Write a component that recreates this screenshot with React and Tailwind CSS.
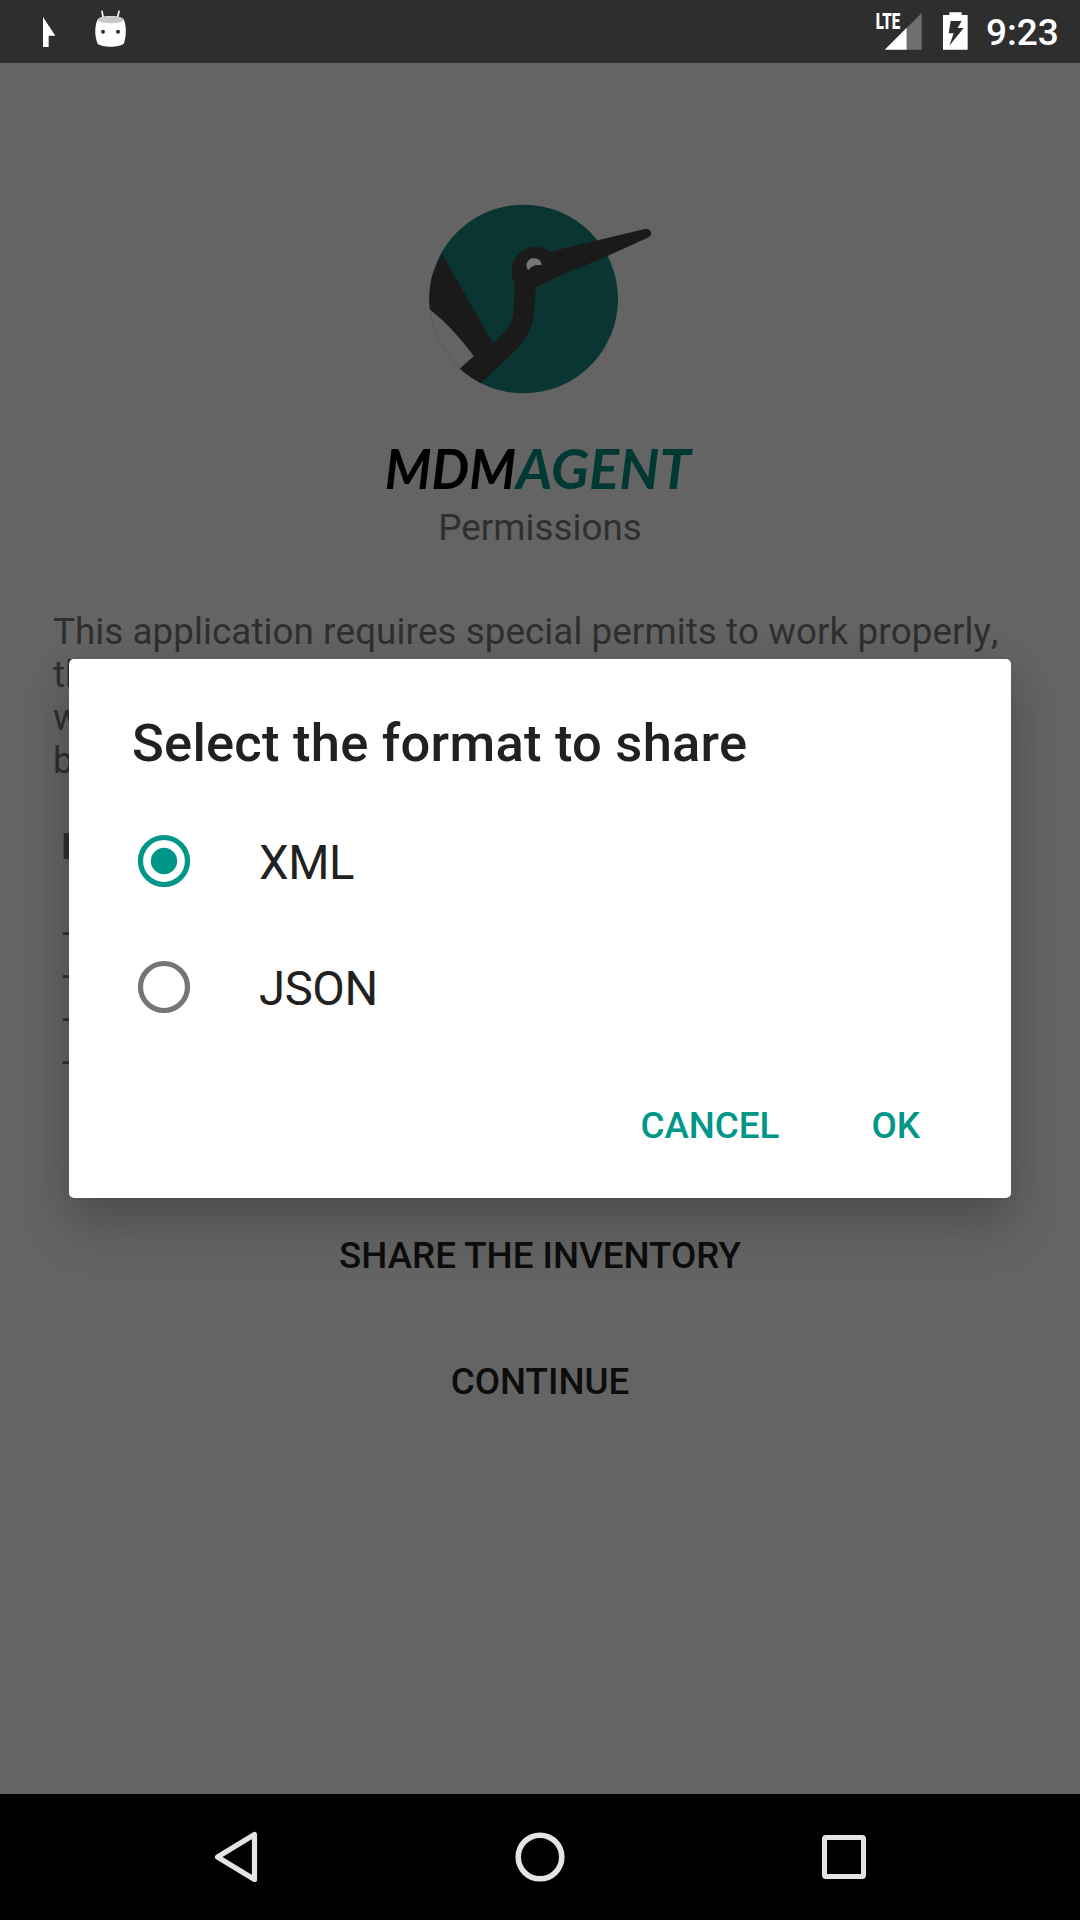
const bodyLines = [
  { text: "This application requires special permits to work properly," },
  { text: "th" },
  { text: "w" },
  { text: "b" },
];

function StatusBar() {
  return (
    <header className="flex h-[63px] shrink-0 items-center justify-between bg-[#2e2e2e]">
      <svg className="h-[63px] w-[200px]" viewBox="0 0 600 189">
        <path d="M129 51 L166 107 H146 V141 H129 Z" fill="#fff" />
        <path d="M306 34 L311 60 M357 34 L351 60" stroke="#fff" strokeWidth="5" strokeLinecap="round" />
        <path
          d="M292 60 C302 44 362 44 372 60 C380 82 379 110 371 131 C356 143 308 143 293 131 C284 110 283 82 292 60 Z"
          fill="#fff"
        />
        <ellipse cx="332" cy="59" rx="39" ry="10.5" fill="#c8c8c8" />
        <circle cx="309" cy="95" r="6" fill="#2e2e2e" />
        <circle cx="354" cy="95" r="6" fill="#2e2e2e" />
      </svg>
      <div className="flex items-center pr-[21px]">
        <svg className="h-[63px] w-[136px]" viewBox="0 0 408 189">
          <text
            x="77"
            y="87"
            textLength="74"
            lengthAdjust="spacingAndGlyphs"
            className="font-['Roboto'] text-[67px] font-black"
            fill="#fff"
          >
            LTE
          </text>
          <path d="M170 84 L215 39 V149 H170 Z" fill="#6f6f6f" />
          <path d="M104 149 L170 83 V149 Z" fill="#fff" />
          <path
            fillRule="evenodd"
            d="M298 37 H335 V45 H353 V149 H279 V45 H298 Z M302 63 L296 100 H311 L298 137 L341 84 H323 L335 63 Z"
            fill="#fff"
          />
        </svg>
        <span className="mt-[2px] w-[73px] whitespace-nowrap text-[37px] leading-[43px] font-medium text-white">9:23</span>
      </div>
    </header>
  );
}

function Logo() {
  return (
    <svg className="h-[326px] w-[340px] shrink-0" viewBox="0 0 1020 978">
      <defs>
        <clipPath id="disc">
          <circle cx="461" cy="357" r="283" />
        </clipPath>
      </defs>
      <circle cx="461" cy="357" r="283" fill="#0a3533" />
      <g clipPath="url(#disc)">
        <path d="M170 380 Q250 440 312 528 L260 575 L200 640 L120 500 Z" fill="#646464" />
        <path
          d="M216 222 L369 489 L400 461 C424 437 430 415 431 380 L435 312 L498 322 L492 390 C490 440 470 478 440 508 L336 607 L300 640 L262 572 L312 529 C270 470 225 425 181 389 L150 360 Z"
          fill="#1a1a1a"
        />
      </g>
      <path
        d="M435 314 C415 270 427 232 458 212 C486 195 517 200 541 215 L824 147 C844 144 850 164 836 172 L714 227 L560 291 L498 322 Z"
        fill="#1a1a1a"
      />
      <path d="M475 271 C464 258 470 235 492 235 C507 235 514 245 515 256 C496 253 482 259 475 271 Z" fill="#777" />
      <text
        x="44"
        y="928"
        textLength="394"
        lengthAdjust="spacingAndGlyphs"
        className="font-['Lato'] text-[166px] font-bold italic"
        fill="#000"
      >
        MDM
      </text>
      <text
        x="438"
        y="928"
        textLength="524"
        lengthAdjust="spacingAndGlyphs"
        className="font-['Lato'] text-[166px] font-bold italic"
        fill="#003834"
      >
        AGENT
      </text>
    </svg>
  );
}

function Radio({ checked }) {
  return (
    <svg
      className={checked ? "size-[54px] text-[#009688]" : "size-[54px] text-[#757575]"}
      viewBox="0 0 54 54"
    >
      <circle cx="27" cy="27" r="23.5" fill="none" stroke="currentColor" strokeWidth="5.2" />
      {checked && <circle cx="27" cy="27" r="13.2" fill="currentColor" />}
    </svg>
  );
}

function Option({ label, checked }) {
  return (
    <label className="flex h-[126px] items-center pl-[68px]">
      <Radio checked={checked} />
      <span className="ml-[68px] pt-[3px] text-[47.25px] leading-[56px] tracking-[-0.4px] text-[#212121]">{label}</span>
    </label>
  );
}

function Dialog() {
  return (
    <div
      role="dialog"
      className="absolute top-[659px] left-[69px] flex h-[539px] w-[942px] flex-col rounded-[5px] bg-white shadow-[0_32px_52px_rgba(0,0,0,0.17),0_4px_40px_rgba(0,0,0,0.11)]"
    >
      <h1 className="mt-[53px] ml-[63px] text-[52.5px] leading-[62px] font-medium tracking-[0.24px] whitespace-nowrap text-[#212121]">
        Select the format to share
      </h1>
      <div className="mt-[24px]">
        <Option label="XML" checked />
        <Option label="JSON" />
      </div>
      <div className="mt-[54px] flex justify-end pr-[91px] text-[36.75px] leading-[43px] font-medium text-[#009688]">
        <button className="mr-[92px]">CANCEL</button>
        <button>OK</button>
      </div>
    </div>
  );
}

function NavBar() {
  return (
    <nav className="flex h-[126px] shrink-0 items-center justify-center gap-[244px] bg-black text-[#e4e4e4]">
      <svg className="size-[60px]" viewBox="0 0 60 60" fill="none" stroke="currentColor">
        <path d="M11.5 30 L48.5 7.5 V52.5 Z" strokeWidth="5.2" strokeLinejoin="round" />
      </svg>
      <svg className="size-[60px]" viewBox="0 0 60 60" fill="none" stroke="currentColor">
        <circle cx="30" cy="30" r="21.8" strokeWidth="5.6" />
      </svg>
      <svg className="size-[60px]" viewBox="0 0 60 60" fill="none" stroke="currentColor">
        <rect x="10.5" y="10.5" width="39" height="39" rx="1.5" strokeWidth="5" />
      </svg>
    </nav>
  );
}

export default function App() {
  return (
    <div className="relative flex h-[1920px] w-[1080px] flex-col overflow-hidden bg-[#646464] font-['Roboto',sans-serif]">
      <StatusBar />
      <main className="flex flex-1 flex-col items-center pt-[117px]">
        <Logo />
        <p className="text-[36.75px] leading-[43px] tracking-[0.05px] text-[#2f2f2f]">Permissions</p>
        <div className="mt-[61px] w-full pl-[53px] text-[36.75px] leading-[43px] tracking-[0.07px] whitespace-nowrap text-[#2f2f2f] [font-kerning:none]">
          {bodyLines.map((l) => (
            <p key={l.text}>{l.text}</p>
          ))}
          <div className="mt-[43px] pl-[9px]">
            <p className="mb-[43px] -ml-px font-bold">I</p>
            <p>-</p>
            <p>-</p>
            <p>-</p>
            <p>-</p>
          </div>
        </div>
        <button className="mt-[151px] text-[36.75px] leading-[43px] font-medium text-[#0d0d0d]">SHARE THE INVENTORY</button>
        <button className="mt-[83px] text-[36.75px] leading-[43px] font-medium text-[#0d0d0d]">CONTINUE</button>
      </main>
      <NavBar />
      <Dialog />
    </div>
  );
}
